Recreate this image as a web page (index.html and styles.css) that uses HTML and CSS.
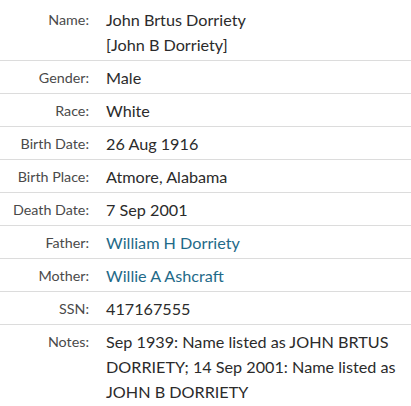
FILE: index.html
```html
<!DOCTYPE html>
<html>
<head>
<meta charset="utf-8">
<link rel="stylesheet" href="styles.css">
</head>
<body>
<dl class="record">
  <div class="row">
    <dt class="label">Name:</dt>
    <dd class="value">John Brtus Dorriety<br>[John B Dorriety]</dd>
  </div>
  <div class="row">
    <dt class="label">Gender:</dt>
    <dd class="value">Male</dd>
  </div>
  <div class="row">
    <dt class="label">Race:</dt>
    <dd class="value">White</dd>
  </div>
  <div class="row">
    <dt class="label">Birth Date:</dt>
    <dd class="value">26 Aug 1916</dd>
  </div>
  <div class="row">
    <dt class="label">Birth Place:</dt>
    <dd class="value">Atmore, Alabama</dd>
  </div>
  <div class="row">
    <dt class="label">Death Date:</dt>
    <dd class="value">7 Sep 2001</dd>
  </div>
  <div class="row">
    <dt class="label">Father:</dt>
    <dd class="value"><a class="link" href="#">William H Dorriety</a></dd>
  </div>
  <div class="row">
    <dt class="label">Mother:</dt>
    <dd class="value"><a class="link" href="#">Willie A Ashcraft</a></dd>
  </div>
  <div class="row">
    <dt class="label">SSN:</dt>
    <dd class="value">417167555</dd>
  </div>
  <div class="row">
    <dt class="label">Notes:</dt>
    <dd class="value">Sep 1939: Name listed as JOHN BRTUS DORRIETY; 14 Sep 2001: Name listed as JOHN B DORRIETY</dd>
  </div>
</dl>
</body>
</html>
```
FILE: styles.css
```css
html, body {
  margin: 0;
  padding: 0;
  background: #fff;
}
body {
  font-family: Lato, "Liberation Sans", sans-serif;
  color: #2b2b2b;
}
.record {
  margin: 0;
  padding-top: 3px;
}
.row {
  display: grid;
  grid-template-columns: 89px 1fr;
  column-gap: 17px;
  padding: 4px 0 3px;
  border-top: 1px solid #dcdcdc;
  line-height: 25px;
}
.row:first-child {
  border-top: none;
}
.label {
  margin: 0;
  text-align: right;
  font-size: 14.3px;
  color: #4a4a4a;
}
.value {
  margin: 0;
  font-size: 16.2px;
  color: #2b2b2b;
  padding-right: 8px;
}
.link {
  color: #1f6a89;
  text-decoration: none;
}
```
